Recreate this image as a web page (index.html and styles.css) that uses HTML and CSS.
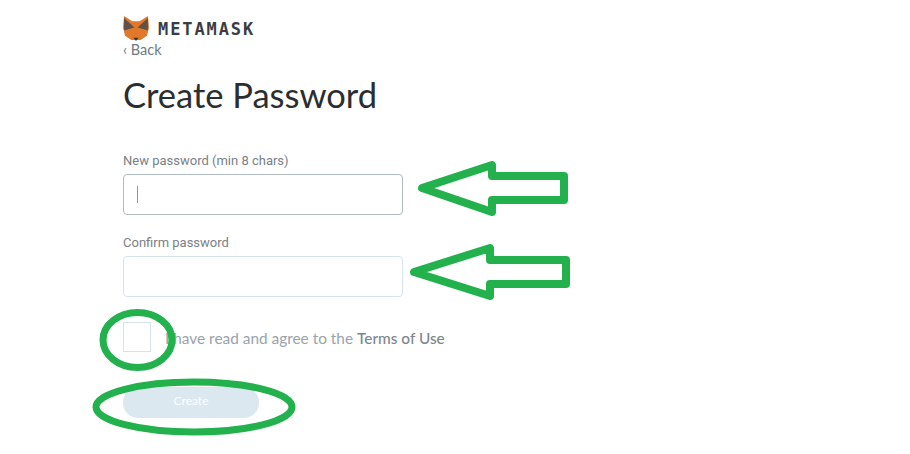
FILE: index.html
```html
<!DOCTYPE html>
<html lang="en">
  <head>
    <meta charset="UTF-8" />
    <title>Create Password</title>
    <link rel="stylesheet" href="styles.css">
  </head>
  <body>
    <div class="page">
      <div class="brand">
        <svg class="fox" viewBox="0 0 25 24" width="26" height="25">
          <polygon points="1,0 9,5 16,5 24,0 25,11 23,19 17,23 8,23 2,19 0,11" fill="#e2792a" />
          <polygon points="1,2 11,11 1,14" fill="#5f5148" />
          <polygon points="24,2 14,11 24,14" fill="#5f5148" />
          <polygon points="10,21 15,21 12.500,24" fill="#3d3530" />
        </svg>
        <span class="wordmark">METAMASK</span>
      </div>
      <a class="back">&lsaquo; Back</a>
      <h1>Create Password</h1>
      <label class="field-label">New password (min 8 chars)</label>
      <div class="input input-focus"><span class="caret"></span></div>
      <label class="field-label">Confirm password</label>
      <div class="input"></div>
      <div class="terms">
        <span class="checkbox"></span>
        <span class="terms-text">I have read and agree to the <b>Terms of Use</b></span>
      </div>
      <button class="create">Create</button>
    </div>

    <!-- green annotations drawn on top of the screenshot -->
    <svg class="marks" viewBox="0 0 910 454" width="910" height="454">
      <polygon points="422,188 492,165 492,176 564,176 564,200 492,200 492,212" />
      <polygon points="414,272 490,248 490,260 566,260 566,284 490,284 490,296" />
      <ellipse cx="137.500" cy="340" rx="34.500" ry="27.500" />
      <ellipse cx="194" cy="407" rx="98" ry="25" />
    </svg>
  </body>
</html>
```

FILE: styles.css
```css
html, body {
    margin: 0;
    padding: 0;
    background-color: #ffffff;
}

body {
    width: 910px;
    height: 454px;
    overflow: hidden;
    font-family: 'Roboto', sans-serif;
}

.page {
    padding: 15px 0 0 123px;
}

.brand {
    display: flex;
    align-items: center;
    height: 27px;
}

.fox {
    display: block;
}

.wordmark {
    margin-left: 9px;
    font-family: 'DejaVu Sans Mono', monospace;
    font-size: 17px;
    letter-spacing: 1.900px;
    font-weight: bold;
    color: #3a3e42;
}

.back {
    display: block;
    height: 16px;
    line-height: 16px;
    font-family: 'Lato', sans-serif;
    font-size: 14.500px;
    color: #6f7a83;
}

h1 {
    margin: 15px 0 0;
    height: 44px;
    line-height: 44px;
    font-family: 'Lato', sans-serif;
    font-size: 34.500px;
    font-weight: 400;
    color: #2b2e31;
}

.field-label {
    display: block;
    height: 18px;
    line-height: 18px;
    font-size: 13px;
    color: #7a8086;
}

.page h1 + .field-label {
    margin-top: 35px;
}

.input {
    box-sizing: border-box;
    display: flex;
    align-items: center;
    width: 280px;
    height: 41px;
    margin: 4px 0 19px;
    padding-left: 13px;
    border: 1px solid #d5e3ee;
    border-radius: 4px;
}

.input-focus {
    border: 1.500px solid #b0bcc0;
}

.caret {
    width: 1px;
    height: 17px;
    background-color: #8b99a3;
}

.terms {
    display: flex;
    align-items: center;
    margin-top: 25px;
    font-family: 'Lato', sans-serif;
    font-size: 15.400px;
    color: #9aa3aa;
}

.terms-text {
    padding-top: 2px;
}

.terms b {
    font-weight: 500;
    color: #7d868d;
}

.checkbox {
    box-sizing: border-box;
    width: 28px;
    height: 30px;
    margin-right: 14px;
    border: 1px solid #d5e3ee;
}

.create {
    display: block;
    width: 136px;
    height: 31px;
    margin-top: 35px;
    padding: 0 0 4px;
    border: none;
    border-radius: 15px;
    background-color: #dce8f0;
    color: #fbfdfe;
    font-family: 'Lato', sans-serif;
    font-size: 12px;
}

.marks {
    position: absolute;
    top: 0;
    left: 0;
}

.marks polygon, .marks ellipse {
    fill: none;
    stroke: #22b14c;
    stroke-width: 8;
    stroke-linejoin: round;
}

.marks ellipse {
    stroke-width: 7;
}
```
